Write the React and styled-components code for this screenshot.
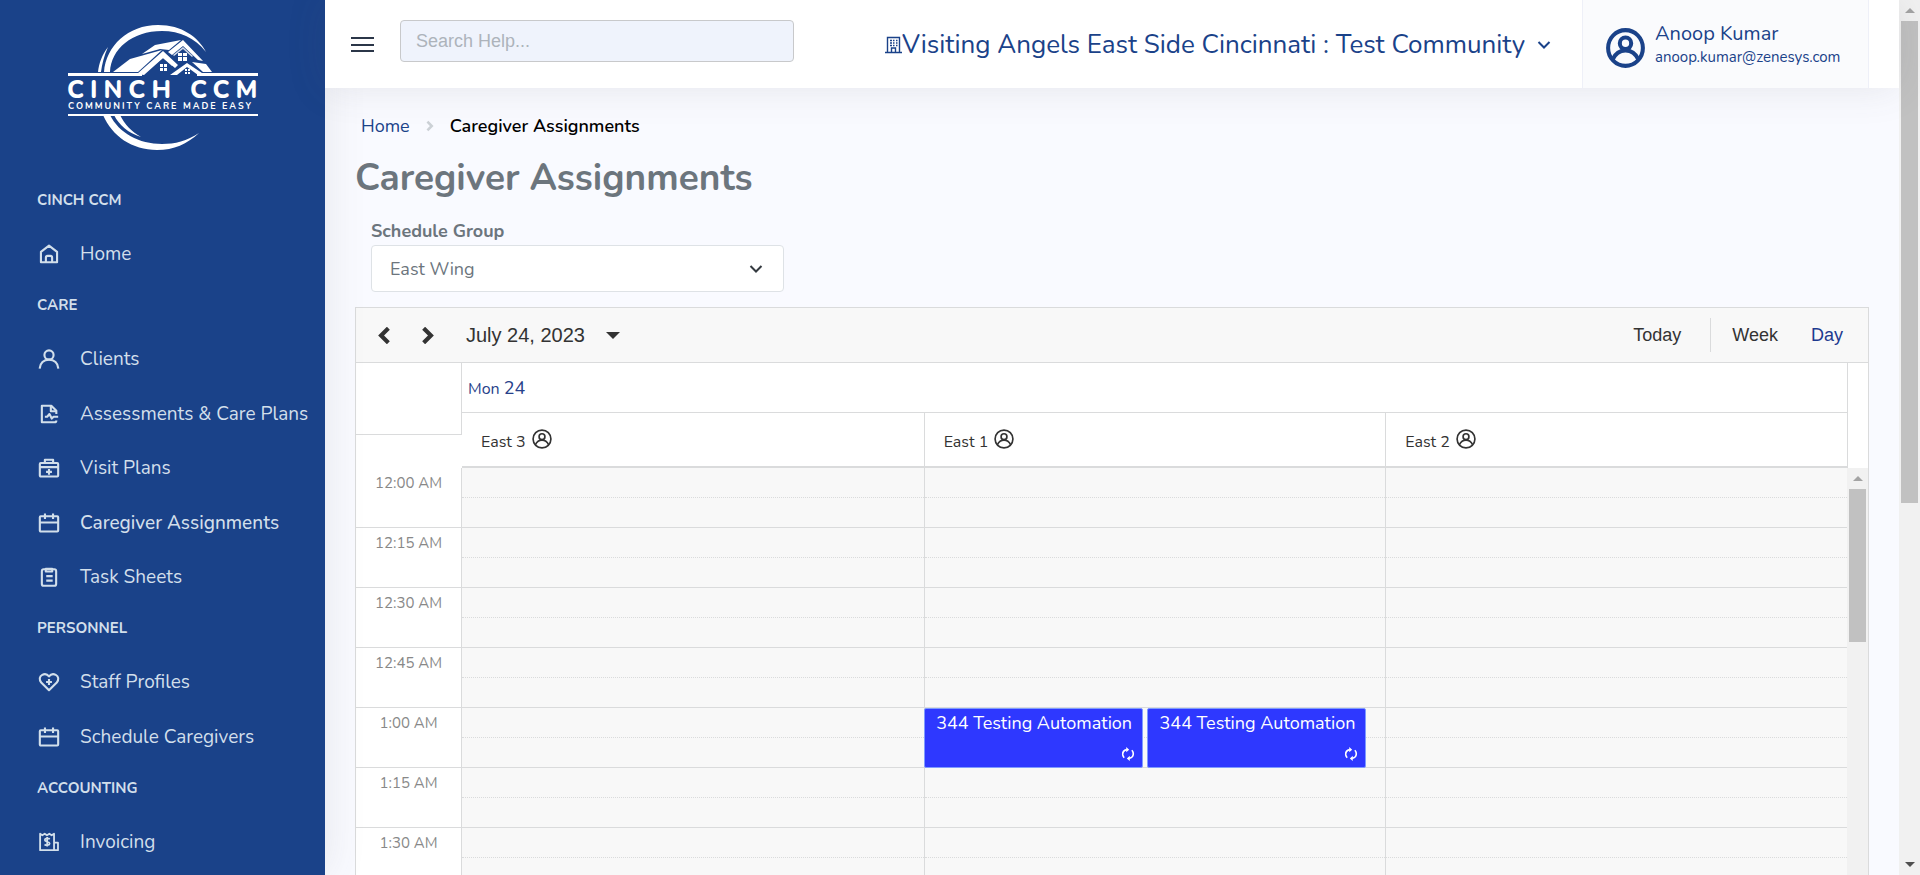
import React from "react";
import styled, { createGlobalStyle } from "styled-components";

const sans = `Nunito, Lato, "Noto Sans", sans-serif`;
const arial = `"Liberation Sans", Arial, sans-serif`;
const blue = "#1a4289";
const line = "#dadbdc";

const Global = createGlobalStyle`
  *, *::before, *::after { box-sizing: border-box; }
  body { margin: 0; font-family: ${sans}; background: #f9faff; }
  button, input, select { font: inherit; }
  a { color: inherit; text-decoration: none; }
`;

const Shell = styled.div`
  display: flex;
  height: 100vh;
  overflow: hidden;
`;

/* ---------- sidebar ---------- */
const Sidebar = styled.aside`
  flex: 0 0 325px;
  position: relative;
  z-index: 1;
  background: ${blue};
  color: #d2dfeb;
  box-shadow: 0 0 40px rgba(82, 85, 92, 0.12);
  overflow: hidden;
`;
const Brand = styled.a`
  display: block;
  padding: 24px 0 0 67px;
  height: 180px;
  svg { display: block; }
`;
const SectionTitle = styled.h2`
  margin: 0;
  padding-left: 37px;
  height: 38px;
  line-height: 40px;
  font-size: 15px;
  font-weight: 700;
`;
const NavList = styled.ul`
  list-style: none;
  display: flex;
  flex-direction: column;
  justify-content: space-between;
  margin: 0;
  padding: 9px 0 4px;
  height: ${(p) => p.$h};
`;
const NavLink = styled.a`
  display: flex;
  align-items: center;
  height: 54px;
  padding-left: 38px;
  gap: 20px;
  font-size: 19px;
  font-weight: ${(p) => (p.$active ? 500 : 400)};
  white-space: nowrap;
`;

/* ---------- header ---------- */
const Page = styled.div`
  flex: 1;
  min-width: 0;
  display: flex;
  flex-direction: column;
`;
const Header = styled.header`
  position: relative;
  z-index: 2;
  flex: 0 0 88px;
  display: flex;
  align-items: stretch;
  background: #fff;
  color: ${blue};
  padding-right: 30px;
  box-shadow: 0 0 40px rgba(82, 85, 92, 0.12);
`;
const MenuButton = styled.button`
  border: 0;
  background: none;
  padding: 0;
  margin: 36px 26px 0 26px;
  height: 17px;
  width: 23px;
  svg { display: block; }
`;
const Search = styled.input`
  margin-top: 20px;
  width: 394px;
  height: 42px;
  padding: 0 15px;
  border: 1px solid #c8c9cb;
  border-radius: 4px;
  background: #eff3fc;
  font-family: ${arial};
  font-size: 18px;
  &::placeholder { color: #adb3bb; opacity: 1; }
`;
const Community = styled.button`
  display: flex;
  align-items: center;
  margin-left: auto;
  border: 0;
  background: none;
  padding: 2px 0 0;
  margin-right: 31px;
  color: inherit;
  font-size: 26px;
  line-height: 32px;
  white-space: nowrap;
  svg:last-child { margin-left: 12px; }
`;
const Account = styled.a`
  display: flex;
  gap: 10px;
  width: 287px;
  padding: 21px 0 0 23px;
  border: solid #eef0f8;
  border-width: 0 1px;
  background: #fafbfd;
  svg { margin-top: 7px; }
`;
const AccountName = styled.div`
  font-size: 20px;
  line-height: 26px;
`;
const AccountMail = styled.div`
  font-size: 15px;
  line-height: 20px;
`;

/* ---------- content ---------- */
const Content = styled.main`
  flex: 1;
  min-height: 0;
  display: flex;
  flex-direction: column;
  padding: 25px 30px 0;
`;
const Crumbs = styled.nav`
  display: flex;
  align-items: center;
  padding-left: 6px;
  height: 26px;
  font-size: 18px;
  color: ${blue};
  svg { margin: 0 14px; }
  strong { color: #000; font-weight: 600; }
`;
const Title = styled.h1`
  margin: 13px 0 0;
  font-size: 37px;
  line-height: 52px;
  font-weight: 700;
  color: #6c757d;
`;
const Field = styled.div`
  width: 413px;
  margin: 14px 0 15px 16px;
  color: #6c757d;
  label {
    display: block;
    font-size: 18px;
    line-height: 26px;
    font-weight: 700;
  }
`;
const SelectWrap = styled.div`
  display: grid;
  align-items: center;
  margin-top: 1px;
  > * { grid-area: 1 / 1; }
  svg { justify-self: end; margin-right: 21px; pointer-events: none; }
`;
const Select = styled.select`
  appearance: none;
  width: 100%;
  height: 47px;
  padding: 0 18px;
  border: 1px solid #dee2e6;
  border-radius: 4px;
  background: #fff;
  color: #6c757d;
  font-size: 18px;
`;

/* ---------- scheduler ---------- */
const Scheduler = styled.section`
  flex: 1;
  min-height: 0;
  display: flex;
  flex-direction: column;
  border: 1px solid ${line};
  border-bottom: 0;
  background: #fff;
  overflow: hidden;
`;
const Toolbar = styled.div`
  flex: 0 0 55px;
  display: flex;
  align-items: center;
  padding: 0 25px 0 19px;
  background: #f8f8f8;
  border-bottom: 1px solid ${line};
  font-family: ${arial};
  color: #333;
`;
const ToolButton = styled.button`
  display: flex;
  align-items: center;
  border: 0;
  background: none;
  padding: 0;
  color: ${(p) => (p.$active ? "#1d3a8f" : "#333")};
  font-size: ${(p) => (p.$large ? "20px" : "18px")};
  line-height: 24px;
`;
const Arrows = styled.div`
  display: flex;
  gap: 28px;
  margin-right: 29px;
`;
const DateText = styled.span`
  margin-right: 21px;
`;
const Views = styled.div`
  display: flex;
  align-items: center;
  gap: 33px;
  margin-left: auto;
`;
const Separator = styled.span`
  width: 1px;
  height: 34px;
  margin: 0 -12px 0 -4px;
  background: ${line};
`;
const Board = styled.div`
  flex: 1;
  min-height: 0;
  display: flex;
  overflow: hidden;
`;
const Grid = styled.table`
  flex: 1;
  width: 100%;
  align-self: flex-start;
  table-layout: fixed;
  border-collapse: separate;
  border-spacing: 0;
  color: #333;
  th, td { padding: 0; text-align: left; font-weight: 400; }
`;
const TimeCol = styled.col`
  width: 106px;
`;
const Corner = styled.th`
  vertical-align: top;
`;
const CornerBox = styled.div`
  height: 72px;
  border: solid ${line};
  border-width: 0 1px 1px 0;
`;
const DayHead = styled.th`
  height: 50px;
  border-bottom: 1px solid ${line};
  && { padding-left: 6px; }
  color: #27418a;
  font-size: 16px;
  span { font-size: 18px; }
`;
const RoomHead = styled.th`
  height: 55px;
  border-bottom: 2px solid ${line};
  font-size: 16px;
  && { padding: 0 0 2px 19px; }
  & + & { border-left: 1px solid ${line}; }
`;
const RoomLabel = styled.div`
  display: flex;
  align-items: center;
  gap: 6px;
  span { padding-top: 6px; }
`;
const TimeCell = styled.th`
  height: 60px;
  border: solid ${line};
  border-width: 0 1px 1px 0;
  vertical-align: top;
  color: #888;
  font-size: 15px;
  line-height: 30px;
  && { text-align: center; }
`;
const Slot = styled.td`
  position: relative;
  height: 60px;
  vertical-align: top;
  background: #f8f8f8;
  border-bottom: 1px solid ${line};
  & + & { border-left: 1px solid ${line}; }
`;
const HalfHour = styled.div`
  height: 30px;
  border-bottom: 1px dotted ${line};
`;
const Appointment = styled.button`
  position: absolute;
  top: 0;
  left: ${(p) => (p.$second ? "calc(50% - 8px)" : "-1px")};
  width: 219px;
  height: 60px;
  display: flex;
  flex-direction: column;
  justify-content: space-between;
  padding: 2px 7px 6px 9px;
  border: 1px solid #7f9bff;
  border-radius: 2px;
  background: #2e38ff;
  color: #fff;
  font-size: 18px;
  line-height: 24px;
  white-space: nowrap;
  svg { align-self: flex-end; }
`;
const GridSide = styled.div`
  flex: 0 0 21px;
  display: flex;
  flex-direction: column;
`;
const SideHead = styled.div`
  flex: 0 0 105px;
  border-left: 1px solid ${line};
`;

/* ---------- scroll bars ---------- */
const Track = styled.div`
  flex: 1 0 auto;
  width: 21px;
  display: flex;
  flex-direction: column;
  align-items: center;
  background: #f1f1f1;
`;
const PageTrack = styled(Track)`
  flex: 0 0 21px;
`;
const ScrollArrow = styled.span`
  flex: 0 0 21px;
  display: flex;
  align-items: center;
  &::before {
    content: "";
    border: 5px solid transparent;
    border-top-width: ${(p) => (p.$down ? "5px" : "0")};
    border-bottom-width: ${(p) => (p.$down ? "0" : "5px")};
    border-top-color: ${(p) => (p.$down ? "#505050" : "transparent")};
    border-bottom-color: ${(p) => (p.$down ? "transparent" : "#a3a3a3")};
  }
`;
const Thumb = styled.span`
  width: 17px;
  height: ${(p) => p.$h};
  background: #c1c1c1;
`;
const Spacer = styled.span`
  flex: 1;
`;

/* ---------- icons ---------- */
const Svg = ({ size = 22, sw = 2.3, children, ...rest }) => (
  <svg width={size} height={size} viewBox="0 0 24 24" fill="none" stroke="currentColor"
    strokeWidth={sw} strokeLinejoin="round" aria-hidden="true" {...rest}>{children}</svg>
);
const icons = {
  home: <><path d="M3.200 9.600 12 2.800l8.800 6.800V21H3.200z" /><path d="M8.600 21v-5a2 2 0 0 1 2-2h2.800a2 2 0 0 1 2 2v5" /></>,
  user: <><circle cx="12" cy="7.600" r="5" /><path d="M1.800 22.500c.3-6 4.500-9.800 10.200-9.800s9.900 3.800 10.200 9.800" /></>,
  report: <><path d="M20 12V8.500L14.500 3H4.200v18H18c1.200 0 2-.7 2-2" /><path d="M14 3v6h6" /><path d="M7.500 15h2.500l2.500-3 2.500 5 2-2h5" /></>,
  kit: <><rect x="2" y="6.500" width="20" height="14.700" rx="1" /><path d="M7.500 6.200V3h9v3.200M2.200 11h19.600M12 13v6.400M8.800 16.200h6.400" /></>,
  calendar: <><rect x="2" y="4.600" width="20" height="16.600" rx="1" /><path d="M7.600 1.500v6M16.400 1.500v6M2.200 11.500h19.600" /></>,
  clipboard: <><rect x="4.200" y="3.600" width="15.600" height="18" rx="2" /><path d="M8.500 3h7v3h-7zM9 11h7M9 16h7" /></>,
  heart: <><path d="m12 21-8.500-8.500C1 9.600 1.500 5.700 4.600 4.200 7.200 3 10.200 3.600 12 5.800c1.800-2.200 4.800-2.800 7.400-1.600 3.100 1.500 3.600 5.400 1.100 8.300z" /><path d="M12 8.800v6.400M8.800 12h6.400" /></>,
  invoice: <><path d="M17.500 20.900H2.300V3l2.400 1.600L7.300 3l2.500 1.600L12.400 3l2.500 1.600L17.500 3v17.900h4.300v-8.200h-4.300" strokeWidth="2" /><path d="M12.900 8.700c-1.500-1-5.500-1-5.500 1.200s5.300 1.400 5.300 3.700-3.900 2.200-5.600 1.100M10 6.600V17" strokeWidth="1.900" /></>,
};
const PersonCircle = ({ width, height, sw }) => (
  <svg width={width} height={height} viewBox="0 0 24 24" preserveAspectRatio="none" fill="none"
    stroke="currentColor" strokeWidth={sw} aria-hidden="true">
    <circle cx="12" cy="12" r="10.700" />
    <circle cx="12" cy="9.200" r="3.500" />
    <path d="M4 19c1.700-3.600 4.600-5.600 8-5.600s6.300 2 8 5.600" />
  </svg>
);
const Chevron = ({ size = 14, d = "M1.500 4 7 9.500 12.500 4", sw = 2, ...rest }) => (
  <svg width={size} height={size} viewBox="0 0 14 14" fill="none" stroke="currentColor"
    strokeWidth={sw} aria-hidden="true" {...rest}><path d={d} /></svg>
);

const WordMark = styled.text`
  font-family: ${sans};
  font-weight: ${(p) => (p.$small ? 700 : 800)};
  font-size: ${(p) => (p.$small ? "9px" : "25px")};
  letter-spacing: ${(p) => (p.$small ? "2px" : "6px")};
  fill: #fff;
`;
const Logo = () => (
  <svg width="206" height="128" viewBox="0 0 206 128" fill="#fff" role="img" aria-label="Cinch CCM">
    <path d="M37 48C39 22 61 1 91 1c24 0 40 12 48 27C128 14 113 7 95 7 65 7 44 25 43 48z" />
    <path d="M31 48c1-9 4-17 10-25-4 9-6 17-7 25z" />
    <path d="m46 48 17-13 32-9-24 22z" />
    <path d="m75 30 13-9 26-5-12 10-9-1z" />
    <path d="m70 50 26-23 15 14-3 3-12-10-19 17z" />
    <path d="m101 28 15-12 20 21-5-1-15-14-11 9z" />
    <path d="m103 51 17-12 18 12h-7l-11-8-10 8zM125 38l14 2 6 8h-9z" />
    <path d="m86 40 10-8 10 9-1 1-9-8-9 7zM106 31l10-8 10 9-1 1-9-8-9 7z" opacity=".8" />
    <path d="M93 40h3v3h-3zM97 40h3v3h-3zM93 44h3v3h-3zM97 44h3v3h-3zM111 29h4v3h-4zM116 29h4v3h-4zM111 33h4v4h-4zM116 33h4v4h-4zM118 45h2v2h-2zM121 45h2v2h-2zM118 48h2v2h-2zM121 48h2v2h-2z" />
    <path d="M1 49h74v3H1zM130 49h61v3h-61zM1 90h190v2H1z" />
    <path d="M36 91c9 21 29 35 54 35 17 0 30-6 42-17-12 8-24 11-37 11-23 0-43-11-52-29z" />
    <path d="M47 91c5 10 14 18 27 22-10-6-16-12-21-22z" />
    <WordMark x="0" y="74">CINCH CCM</WordMark>
    <WordMark $small x="1" y="85">COMMUNITY CARE MADE EASY</WordMark>
  </svg>
);

const sections = [
  { title: "CINCH CCM", h: "67px", items: [["home", "Home"]] },
  { title: "CARE", h: "285px", items: [["user", "Clients"], ["report", "Assessments & Care Plans"], ["kit", "Visit Plans"], ["calendar", "Caregiver Assignments", true], ["clipboard", "Task Sheets"]] },
  { title: "PERSONNEL", h: "122px", items: [["heart", "Staff Profiles"], ["calendar", "Schedule Caregivers"]] },
  { title: "ACCOUNTING", h: "67px", items: [["invoice", "Invoicing"]] },
];
const times = ["12:00 AM", "12:15 AM", "12:30 AM", "12:45 AM", "1:00 AM", "1:15 AM", "1:30 AM"];
const rooms = ["East 3", "East 1", "East 2"];

const Booking = ({ second }) => (
  <Appointment $second={second}>
    344 Testing Automation
    <Svg size={14} sw={2.800}>
      <path d="M10 4.500C5 5.500 2.500 9 3 13.500c.3 2 1 3.500 2.500 5M14 19.500c5-1 7.500-4.500 7-9-.3-2-1-3.500-2.500-5" />
      <path d="m9 0 5 4.500L9 9zM15 15l-5 4.500 5 4.500z" fill="currentColor" stroke="none" />
    </Svg>
  </Appointment>
);

export default function App() {
  return (
    <Shell>
      <Global />
      <Sidebar>
        <Brand href="#"><Logo /></Brand>
        <nav>
          {sections.map((s) => (
            <section key={s.title}>
              <SectionTitle>{s.title}</SectionTitle>
              <NavList $h={s.h}>
                {s.items.map(([icon, label, active]) => (
                  <li key={label}><NavLink href="#" $active={active}><Svg>{icons[icon]}</Svg>{label}</NavLink></li>
                ))}
              </NavList>
            </section>
          ))}
        </nav>
      </Sidebar>
      <Page>
        <Header>
          <MenuButton aria-label="Menu">
            <svg width="23" height="17" stroke="#2b3648" strokeWidth="2"><path d="M0 2h23M0 9h23M0 15h23" /></svg>
          </MenuButton>
          <Search type="search" placeholder="Search Help..." aria-label="Search Help" />
          <Community>
            <svg width="17" height="18" viewBox="0 0 17 18" fill="none" stroke="currentColor" aria-hidden="true">
              <path d="M2.500 16.500v-15h12v15M0 16.500h17M6.500 16v-4h4v4" strokeWidth="1.400" />
              <path d="M5 4.500h2M8 4.500h1.500M11 4.500h1.500M5 7h2M8 7h1.500M11 7h1.500M5 9.500h2M8 9.500h1.500M11 9.500h1.500" strokeWidth="1.300" />
            </svg>
            Visiting Angels East Side Cincinnati : Test Community
            <Chevron />
          </Community>
          <Account href="#">
            <PersonCircle width={39} height={40} sw={2.500} />
            <div>
              <AccountName>Anoop Kumar</AccountName>
              <AccountMail>anoop.kumar@zenesys.com</AccountMail>
            </div>
          </Account>
        </Header>
        <Content>
          <Crumbs aria-label="Breadcrumb">
            <a href="#">Home</a>
            <Chevron size={12} d="M4 2 9 7l-5 5" sw={3} color="#ccd1d6" />
            <strong>Caregiver Assignments</strong>
          </Crumbs>
          <Title>Caregiver Assignments</Title>
          <Field>
            <label htmlFor="group">Schedule Group</label>
            <SelectWrap>
              <Select id="group"><option>East Wing</option></Select>
              <Chevron color="#343a40" />
            </SelectWrap>
          </Field>
          <Scheduler>
            <Toolbar>
              <Arrows>
                <ToolButton aria-label="Previous"><Chevron d="M11 1 5 7l6 6" sw={3.400} size={17} /></ToolButton>
                <ToolButton aria-label="Next"><Chevron d="m3 1 6 6-6 6" sw={3.400} size={17} /></ToolButton>
              </Arrows>
              <ToolButton $large>
                <DateText>July 24, 2023</DateText>
                <svg width="14" height="7" fill="currentColor" aria-hidden="true"><path d="M0 0h14L7 7z" /></svg>
              </ToolButton>
              <Views>
                <ToolButton>Today</ToolButton>
                <Separator />
                <ToolButton>Week</ToolButton>
                <ToolButton $active>Day</ToolButton>
              </Views>
            </Toolbar>
            <Board>
              <Grid>
                <colgroup><TimeCol /><col /><col /><col /></colgroup>
                <thead>
                  <tr>
                    <Corner rowSpan={2}><CornerBox /></Corner>
                    <DayHead colSpan={3}>Mon <span>24</span></DayHead>
                  </tr>
                  <tr>
                    {rooms.map((r) => (
                      <RoomHead key={r} scope="col">
                        <RoomLabel><span>{r}</span><PersonCircle width={20} height={20} sw={2} /></RoomLabel>
                      </RoomHead>
                    ))}
                  </tr>
                </thead>
                <tbody>
                  {times.map((t) => (
                    <tr key={t}>
                      <TimeCell scope="row">{t}</TimeCell>
                      {rooms.map((r) => (
                        <Slot key={r}>
                          <HalfHour />
                          {t === "1:00 AM" && r === "East 1" && <><Booking /><Booking second /></>}
                        </Slot>
                      ))}
                    </tr>
                  ))}
                </tbody>
              </Grid>
              <GridSide>
                <SideHead />
                <Track><ScrollArrow /><Thumb $h="153px" /></Track>
              </GridSide>
            </Board>
          </Scheduler>
        </Content>
      </Page>
      <PageTrack>
        <ScrollArrow />
        <Thumb $h="482px" />
        <Spacer />
        <ScrollArrow $down />
      </PageTrack>
    </Shell>
  );
}
